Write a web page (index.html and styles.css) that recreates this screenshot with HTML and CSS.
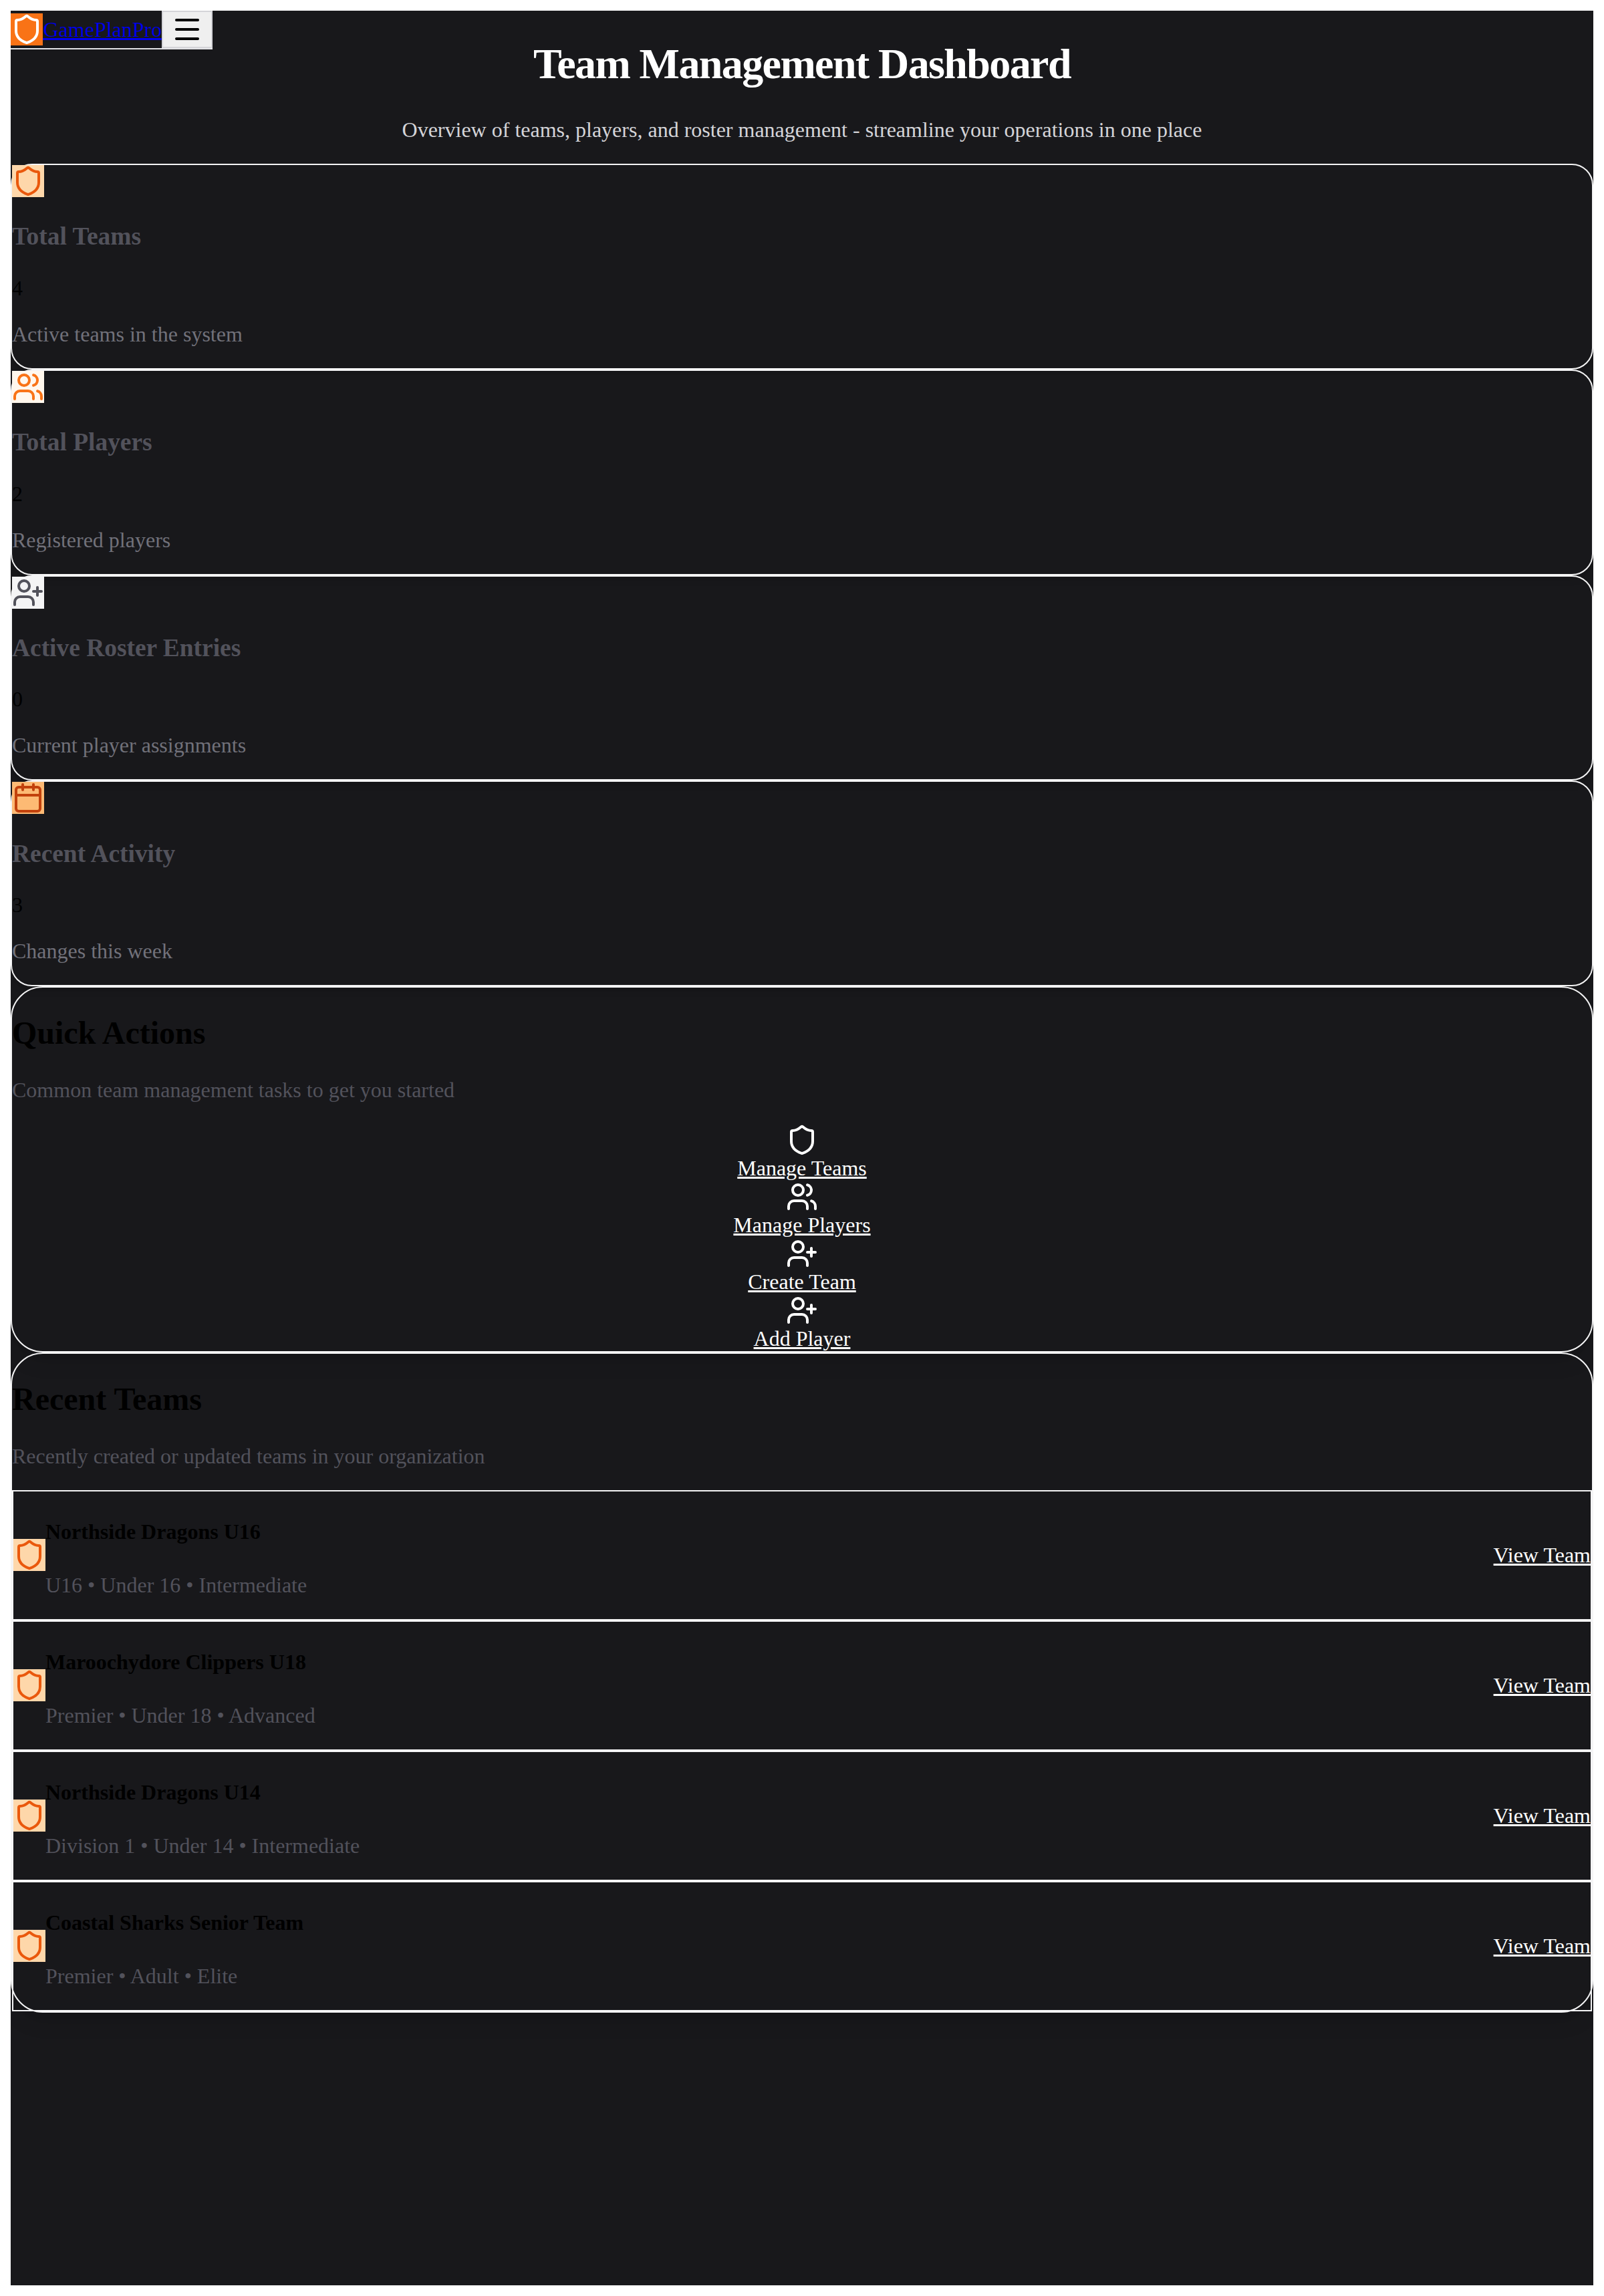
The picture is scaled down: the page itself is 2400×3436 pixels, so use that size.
FILE: index.html
```html
<!DOCTYPE html>
<html lang="en">
<head>
<meta charset="utf-8">
<title>GamePlanPro - Team Management Dashboard</title>
<link rel="stylesheet" href="styles.css">
</head>
<body>
<svg class="sprite" aria-hidden="true">
  <symbol id="shield" viewBox="0 0 24 24"><path d="M20 13c0 5-3.5 7.5-7.66 8.95a1 1 0 0 1-.67-.01C7.5 20.5 4 18 4 13V6a1 1 0 0 1 1-1c2 0 4.5-1.2 6.24-2.72a1.17 1.17 0 0 1 1.52 0C14.51 3.81 17 5 19 5a1 1 0 0 1 1 1z"/></symbol>
  <symbol id="users" viewBox="0 0 24 24"><path d="M16 21v-2a4 4 0 0 0-4-4H6a4 4 0 0 0-4 4v2"/><circle cx="9" cy="7" r="4"/><path d="M22 21v-2a4 4 0 0 0-3-3.87"/><path d="M16 3.13a4 4 0 0 1 0 7.75"/></symbol>
  <symbol id="user-plus" viewBox="0 0 24 24"><path d="M16 21v-2a4 4 0 0 0-4-4H6a4 4 0 0 0-4 4v2"/><circle cx="9" cy="7" r="4"/><path d="M19 8v6"/><path d="M22 11h-6"/></symbol>
  <symbol id="calendar" viewBox="0 0 24 24"><path d="M8 2v4"/><path d="M16 2v4"/><rect width="18" height="18" x="3" y="4" rx="2"/><path d="M3 10h18"/></symbol>
  <symbol id="menu" viewBox="0 0 24 24"><path d="M4 5h16"/><path d="M4 12h16"/><path d="M4 19h16"/></symbol>
</svg>

<nav class="navbar">
  <a class="brand" href="#"><span class="brand-mark"><svg class="icon"><use href="#shield"/></svg></span><span class="brand-name">GamePlanPro</span></a>
  <button class="menu-button" type="button" aria-label="Open menu"><svg class="icon"><use href="#menu"/></svg></button>
</nav>

<main class="page">
  <header class="hero">
    <h1>Team Management Dashboard</h1>
    <p>Overview of teams, players, and roster management - streamline your operations in one place</p>
  </header>

  <section class="stats">
    <article class="stat">
      <div class="badge badge-teams"><svg class="icon"><use href="#shield"/></svg></div>
      <h3>Total Teams</h3>
      <p class="value">4</p>
      <p class="note">Active teams in the system</p>
    </article>
    <article class="stat">
      <div class="badge badge-players"><svg class="icon"><use href="#users"/></svg></div>
      <h3>Total Players</h3>
      <p class="value">2</p>
      <p class="note">Registered players</p>
    </article>
    <article class="stat">
      <div class="badge badge-roster"><svg class="icon"><use href="#user-plus"/></svg></div>
      <h3>Active Roster Entries</h3>
      <p class="value">0</p>
      <p class="note">Current player assignments</p>
    </article>
    <article class="stat">
      <div class="badge badge-activity"><svg class="icon"><use href="#calendar"/></svg></div>
      <h3>Recent Activity</h3>
      <p class="value">3</p>
      <p class="note">Changes this week</p>
    </article>
  </section>

  <section class="panel">
    <h2>Quick Actions</h2>
    <p class="lead">Common team management tasks to get you started</p>
    <div class="actions">
      <a class="action" href="#"><svg class="icon"><use href="#shield"/></svg><span>Manage Teams</span></a>
      <a class="action" href="#"><svg class="icon"><use href="#users"/></svg><span>Manage Players</span></a>
      <a class="action" href="#"><svg class="icon"><use href="#user-plus"/></svg><span>Create Team</span></a>
      <a class="action" href="#"><svg class="icon"><use href="#user-plus"/></svg><span>Add Player</span></a>
    </div>
  </section>

  <section class="panel">
    <h2>Recent Teams</h2>
    <p class="lead">Recently created or updated teams in your organization</p>
    <div class="team">
      <div class="team-info">
        <div class="badge badge-teams"><svg class="icon"><use href="#shield"/></svg></div>
        <div><h4>Northside Dragons U16</h4><p>U16 • Under 16 • Intermediate</p></div>
      </div>
      <a class="view" href="#">View Team</a>
    </div>
    <div class="team">
      <div class="team-info">
        <div class="badge badge-teams"><svg class="icon"><use href="#shield"/></svg></div>
        <div><h4>Maroochydore Clippers U18</h4><p>Premier • Under 18 • Advanced</p></div>
      </div>
      <a class="view" href="#">View Team</a>
    </div>
    <div class="team">
      <div class="team-info">
        <div class="badge badge-teams"><svg class="icon"><use href="#shield"/></svg></div>
        <div><h4>Northside Dragons U14</h4><p>Division 1 • Under 14 • Intermediate</p></div>
      </div>
      <a class="view" href="#">View Team</a>
    </div>
    <div class="team">
      <div class="team-info">
        <div class="badge badge-teams"><svg class="icon"><use href="#shield"/></svg></div>
        <div><h4>Coastal Sharks Senior Team</h4><p>Premier • Adult • Elite</p></div>
      </div>
      <a class="view" href="#">View Team</a>
    </div>
  </section>
</main>
</body>
</html>
```
FILE: styles.css
```css
body {
  margin: 16px;
  background: #fff;
  color: #000;
  font-family: "Liberation Serif", "Times New Roman", serif;
  font-size: 32px;
}

.sprite {
  display: none;
}

.icon {
  display: block;
  width: 48px;
  height: 48px;
  fill: none;
  stroke: currentColor;
  stroke-width: 2;
  stroke-linecap: round;
  stroke-linejoin: round;
}

p {
  margin: 32px 0;
}

/* Navigation floats over the page */
.navbar {
  position: fixed;
  z-index: 10;
  display: flex;
  align-items: center;
  border-bottom: 2px solid #e4e4e7;
}

.brand {
  display: flex;
  align-items: center;
  color: #0000ee;
}

.brand-mark {
  background: #f97316;
  color: #fff;
}

.menu-button {
  padding: 2px 12px;
  border: 2px solid #d4d4d8;
  border-radius: 0;
  background: #efefef;
  color: #000;
}

.page {
  min-height: 3404px;
  overflow: hidden;
  background: #18181b;
}

.hero {
  text-align: center;
}

.hero h1 {
  margin: 0.67em 0;
  color: #fff;
  font-size: 64px;
  letter-spacing: -0.025em;
}

.hero p {
  color: #d4d4d8;
}

/* Stat cards */
.stat {
  border: 2px solid #f4f4f5;
  border-radius: 32px;
  box-shadow: 0 8px 12px -2px rgba(0, 0, 0, 0.1), 0 4px 8px -4px rgba(0, 0, 0, 0.1);
}

.stat h3 {
  margin: 1em 0;
  color: #52525b;
  font-size: 37.44px;
}

.stat .note {
  color: #71717a;
}

.badge {
  width: 48px;
  height: 48px;
}

.badge-teams {
  background: #fed7aa;
  color: #ea580c;
}

.badge-players {
  background: #fff7ed;
  color: #f97316;
}

.badge-roster {
  background: #f4f4f5;
  color: #52525b;
}

.badge-activity {
  background: #fdba74;
  color: #c2410c;
}

/* Panels */
.panel {
  border: 2px solid #f4f4f5;
  border-radius: 48px;
  box-shadow: 0 20px 30px -6px rgba(0, 0, 0, 0.1), 0 8px 12px -8px rgba(0, 0, 0, 0.1);
}

.panel h2 {
  margin: 0.83em 0;
  font-size: 48px;
}

.lead {
  color: #52525b;
}

.action {
  display: flex;
  flex-direction: column;
  align-items: center;
  color: #fff;
}

.team {
  display: flex;
  align-items: center;
  justify-content: space-between;
  border: 2px solid #f4f4f5;
}

.team-info {
  display: flex;
  align-items: center;
}

.team h4 {
  margin: 1.33em 0;
  font-size: 32px;
}

.team p {
  color: #52525b;
}

.view {
  color: #fff;
}
```
